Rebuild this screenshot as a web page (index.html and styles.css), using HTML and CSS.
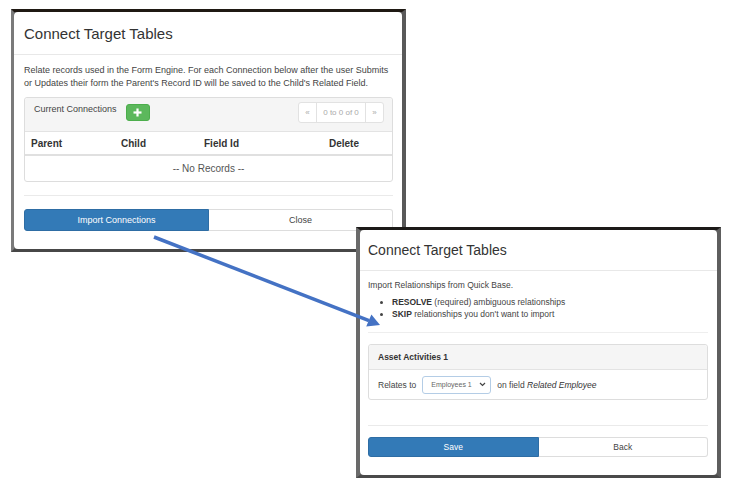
FILE: index.html
```html
<!DOCTYPE html>
<html lang="en">
<head>
<meta charset="utf-8">
<title>Connect Target Tables</title>
<link rel="stylesheet" href="styles.css">
</head>
<body>
<div class="canvas">
  <div class="shot shot-a">
    <div class="modal">
      <div class="head head-a"><span class="title title-a">Connect Target Tables</span></div>
      <div class="body body-a">
        <p class="intro">Relate records used in the Form Engine. For each Connection below after the user Submits or Updates their form the Parent's Record ID will be saved to the Child's Related Field.</p>
        <div class="panel">
          <div class="pa-head">
            <span class="pa-label">Current Connections</span>
            <span class="btn-add">
              <svg width="9" height="9" viewBox="0 0 9 9"><rect x="3.4" y="0.5" width="2.2" height="8" fill="#fff"/><rect x="0.5" y="3.4" width="8" height="2.2" fill="#fff"/></svg>
            </span>
            <div class="pager">
              <span class="pg-arrow">&laquo;</span>
              <span class="pg-mid">0 to 0 of 0</span>
              <span class="pg-arrow">&raquo;</span>
            </div>
          </div>
          <div class="th-row">
            <span>Parent</span><span>Child</span><span>Field Id</span><span>Delete</span>
          </div>
          <div class="empty-row">-- No Records --</div>
        </div>
      </div>
      <div class="foot foot-a">
        <span class="btn btn-primary">Import Connections</span>
        <span class="btn btn-default">Close</span>
      </div>
    </div>
  </div>

  <div class="shot shot-b">
    <div class="modal">
      <div class="head head-b"><span class="title title-b">Connect Target Tables</span></div>
      <div class="body body-b">
        <p class="lead-b">Import Relationships from Quick Base.</p>
        <ul class="bullets">
          <li><b>RESOLVE</b> (required) ambiguous relationships</li>
          <li><b>SKIP</b> relationships you don't want to import</li>
        </ul>
        <div class="rule"></div>
        <div class="panel">
          <div class="pb-head">Asset Activities 1</div>
          <div class="pb-row">
            <span>Relates to</span>
            <span class="select">
              <span class="sel-text">Employees 1</span>
              <svg class="chev" width="7" height="5" viewBox="0 0 7 5"><polyline points="1,1 3.5,3.5 6,1" fill="none" stroke="#444" stroke-width="1.2"/></svg>
            </span>
            <span>on field <i>Related Employee</i></span>
          </div>
        </div>
      </div>
      <div class="foot foot-b">
        <span class="btn btn-primary">Save</span>
        <span class="btn btn-default">Back</span>
      </div>
    </div>
  </div>

  <svg class="arrow" width="733" height="490" viewBox="0 0 733 490">
    <line x1="154" y1="237" x2="369" y2="320.6" stroke="#4472c4" stroke-width="3.5"/>
    <polygon points="380,325 366.2,326.6 371.4,314.6" fill="#4472c4"/>
  </svg>
</div>
</body>
</html>
```
FILE: styles.css
```css
* { box-sizing: border-box; }
html, body {
  margin: 0;
  padding: 0;
  background: #fff;
}
body {
  font-family: "Liberation Sans", Arial, sans-serif;
  color: #444;
}
.canvas {
  position: relative;
  width: 733px;
  height: 490px;
  overflow: hidden;
  background: #fff;
}

/* screenshot frames */
.shot {
  position: absolute;
  display: flex;
  flex-direction: column;
  border-style: solid;
  background: #5c5c5c;
}
.shot-a {
  left: 11px;
  top: 9px;
  width: 395px;
  height: 243px;
  border-width: 3px 4px 3px 3px;
  border-color: #1f1913 #595959 #474747 #7a7a7a;
}
.shot-b {
  left: 356px;
  top: 227px;
  width: 365px;
  height: 251px;
  border-width: 3px 4px 3px 4px;
  border-color: #1c1a18 #5e5e5e #4a4a4a #6a6a6a;
}
.modal {
  flex: 1;
  background: #fff;
  border-radius: 4px;
  display: flex;
  flex-direction: column;
}

/* headers */
.head {
  display: flex;
  align-items: center;
  border-bottom: 1px solid #e8e8e8;
}
.head-a { height: 43px; padding: 0 10px; }
.head-b { height: 41px; padding: 0 8px; }
.title { color: #333; white-space: nowrap; }
.title-a { font-size: 15px; }
.title-b { font-size: 14px; }

/* left body */
.body-a {
  padding: 9px 9px 13px 10px;
  font-size: 9px;
  line-height: 13px;
}
.intro { margin: 0 0 7px; }
.panel {
  border: 1px solid #ddd;
  border-radius: 3px;
  background: #fff;
}
.pa-head {
  height: 34px;
  display: flex;
  align-items: flex-start;
  padding: 4px 8px 0 9px;
  background: #f5f5f5;
  border-bottom: 1px solid #e3e3e3;
  border-radius: 3px 3px 0 0;
}
.pa-label {
  margin-top: 1px;
  color: #444;
  white-space: nowrap;
}
.btn-add {
  margin: 2px 0 0 9px;
  width: 24px;
  height: 17px;
  background: #5cb85c;
  border: 1px solid #4cae4c;
  border-radius: 3px;
  display: flex;
  align-items: center;
  justify-content: center;
}
.btn-add svg { display: block; }
.pager {
  margin-left: auto;
  display: flex;
  height: 21px;
  border: 1px solid #e2e2e2;
  border-radius: 3px;
  background: #fff;
  font-size: 8px;
  color: #aaa;
}
.pager span {
  display: flex;
  align-items: center;
  justify-content: center;
}
.pg-arrow { width: 17px; }
.pg-mid {
  width: 50px;
  border-left: 1px solid #e2e2e2;
  border-right: 1px solid #e2e2e2;
}
.th-row {
  height: 24px;
  display: grid;
  grid-template-columns: 90px 83px 125px auto;
  align-items: center;
  padding-left: 6px;
  border-bottom: 2px solid #e0e0e0;
  font-size: 10px;
  font-weight: bold;
  color: #333;
}
.empty-row {
  height: 25px;
  display: flex;
  align-items: center;
  justify-content: center;
  font-size: 10px;
  color: #555;
}

/* footers */
.foot {
  display: flex;
  border-top: 1px solid #eaeaea;
}
.foot-a {
  margin: 0 9px 0 10px;
  padding: 13px 0 0;
}
.foot-a .btn { height: 22px; font-size: 9px; }
.foot-b {
  margin: 0 9px 0 8px;
  padding: 11px 0 0;
}
.foot-b .btn { height: 20px; font-size: 8.5px; }
.btn {
  flex: 1;
  display: flex;
  align-items: center;
  justify-content: center;
  border: 1px solid #ddd;
}
.btn-primary {
  background: #337ab7;
  border-color: #2e6da4;
  color: #fff;
  border-radius: 3px 0 0 3px;
}
.btn-default {
  background: #fff;
  color: #444;
  border-left: 0;
  border-radius: 0 3px 3px 0;
}

/* right body */
.body-b {
  padding: 8px 9px 25px 8px;
  font-size: 8.5px;
  line-height: 12px;
}
.lead-b { margin: 0 0 5px; }
.bullets {
  margin: 0 0 12px;
  padding-left: 24px;
}
.bullets b { color: #333; }
.rule {
  height: 1px;
  background: #eee;
  margin-bottom: 11px;
}
.pb-head {
  height: 25px;
  display: flex;
  align-items: center;
  padding: 0 9px;
  background: #f5f5f5;
  border-bottom: 1px solid #e3e3e3;
  border-radius: 3px 3px 0 0;
  font-weight: bold;
  color: #333;
}
.pb-row {
  height: 29px;
  display: flex;
  align-items: center;
  gap: 6px;
  padding: 0 9px;
  white-space: nowrap;
}
.pb-row i { color: #333; }
.select {
  width: 69px;
  height: 18px;
  border: 1px solid #b4cde6;
  border-radius: 3px;
  display: flex;
  align-items: center;
  padding: 0 4px 0 8px;
  font-size: 7px;
  color: #666;
}
.chev { margin-left: auto; display: block; }

/* arrow overlay */
.arrow {
  position: absolute;
  left: 0;
  top: 0;
  pointer-events: none;
}
```
